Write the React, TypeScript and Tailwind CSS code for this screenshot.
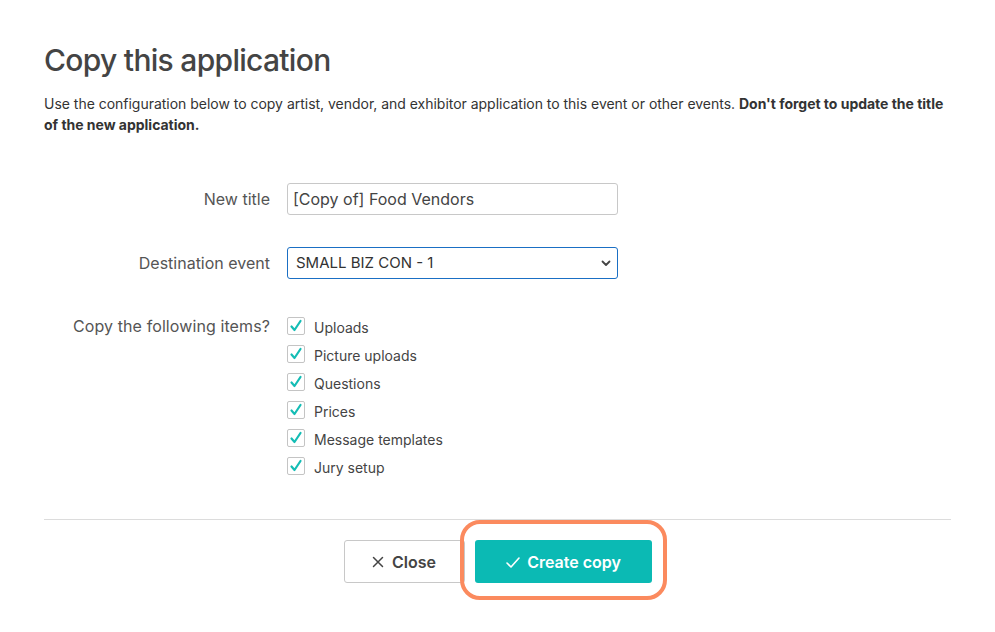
import React from "react";

const items = ["Uploads", "Picture uploads", "Questions", "Prices", "Message templates", "Jury setup"];

function Check() {
  return (
    <span className="flex h-[18px] w-[18px] shrink-0 items-center justify-center rounded-[2px] border border-[#c4c4c4] bg-white">
      <svg width="14" height="14" viewBox="0 0 14 14" fill="none">
        <path d="M2.5 7.5 L5.5 11 L11.5 2" stroke="#14bdb5" strokeWidth="2.2" strokeLinecap="round" strokeLinejoin="round" />
      </svg>
    </span>
  );
}

export default function App() {
  return (
    <div className="min-h-[632px] w-[995px] bg-white text-[#444] [font-family:Inter,'Noto_Sans',sans-serif]">
      <div className="px-[44px] pt-[40px]">
        <h1 className="text-[30px] font-medium leading-[40px] tracking-[-0.7px] text-[#444]">Copy this application</h1>
        <p className="mt-[13px] text-[14px] leading-[21px] tracking-[-0.02px] text-[#333]">
          Use the configuration below to copy artist, vendor, and exhibitor application to this event or other events.{" "}
          <span className="font-bold">Don't forget to update the title of the new application.</span>
        </p>

        <div className="mt-[48px] flex flex-col">
          <div className="flex items-center">
            <label className="w-[226px] text-right text-[16px] tracking-[0px] text-[#555]">New title</label>
            <div className="ml-[17px] flex h-[32px] w-[331px] items-center rounded-[3px] border border-[#c8c8c8] px-[5px] text-[16px] tracking-[0px] text-[#444]">
              [Copy of] Food Vendors
            </div>
          </div>
          <div className="mt-[32px] flex items-center">
            <label className="w-[226px] text-right text-[16px] tracking-[0px] text-[#555]">Destination event</label>
            <div className="ml-[17px] flex h-[32px] w-[331px] items-center justify-between rounded-[3px] border border-[#1a6fc4] pl-[8px] pr-[6px] text-[15px] tracking-[0px] text-[#333]">
              <span>SMALL BIZ CON - 1</span>
              <svg width="10" height="10" viewBox="0 0 10 10" fill="none">
                <path d="M1.5 3.5 L5 7 L8.5 3.5" stroke="#444" strokeWidth="1.8" strokeLinecap="round" strokeLinejoin="round" />
              </svg>
            </div>
          </div>
          <div className="mt-[38px] flex items-start">
            <label className="w-[226px] text-right text-[16px] leading-[18px] tracking-[0.1px] text-[#555]">Copy the following items?</label>
            <div className="ml-[17px] flex flex-col gap-[10px]">
              {items.map((it) => (
                <div key={it} className="flex h-[18px] items-center gap-[9px]">
                  <Check />
                  <span className="pt-[3px] text-[14px] tracking-[0px] text-[#444]">{it}</span>
                </div>
              ))}
            </div>
          </div>
        </div>

        <div className="mt-[44px] h-px w-full bg-[#dcdcdc]" />

        <div className="mt-[20px] flex justify-center gap-[10px]">
          <button className="flex h-[43px] w-[121px] items-center justify-center gap-[8px] rounded-[3px] border border-[#c8c8c8] bg-white text-[16px] font-semibold tracking-[0px] text-[#444]">
            <svg width="12" height="12" viewBox="0 0 12 12" fill="none">
              <path d="M1.5 1.5 L10.5 10.5 M10.5 1.5 L1.5 10.5" stroke="#444" strokeWidth="1.5" strokeLinecap="round" />
            </svg>
            Close
          </button>
          <div className="relative">
            <div className="pointer-events-none absolute -bottom-[17px] -left-[15px] -right-[15px] -top-[20px] rounded-[20px] border-[4px] border-[#fb8a5e]" />
            <button className="flex h-[43px] w-[177px] items-center justify-center gap-[6px] rounded-[3px] bg-[#0bbab4] text-[16px] font-semibold tracking-[0px] text-white">
              <svg width="16" height="14" viewBox="0 0 16 14" fill="none">
                <path d="M2 8 L6 12 L14 3" stroke="white" strokeWidth="1.6" strokeLinecap="round" strokeLinejoin="round" />
              </svg>
              Create copy
            </button>
          </div>
        </div>
      </div>
    </div>
  );
}
